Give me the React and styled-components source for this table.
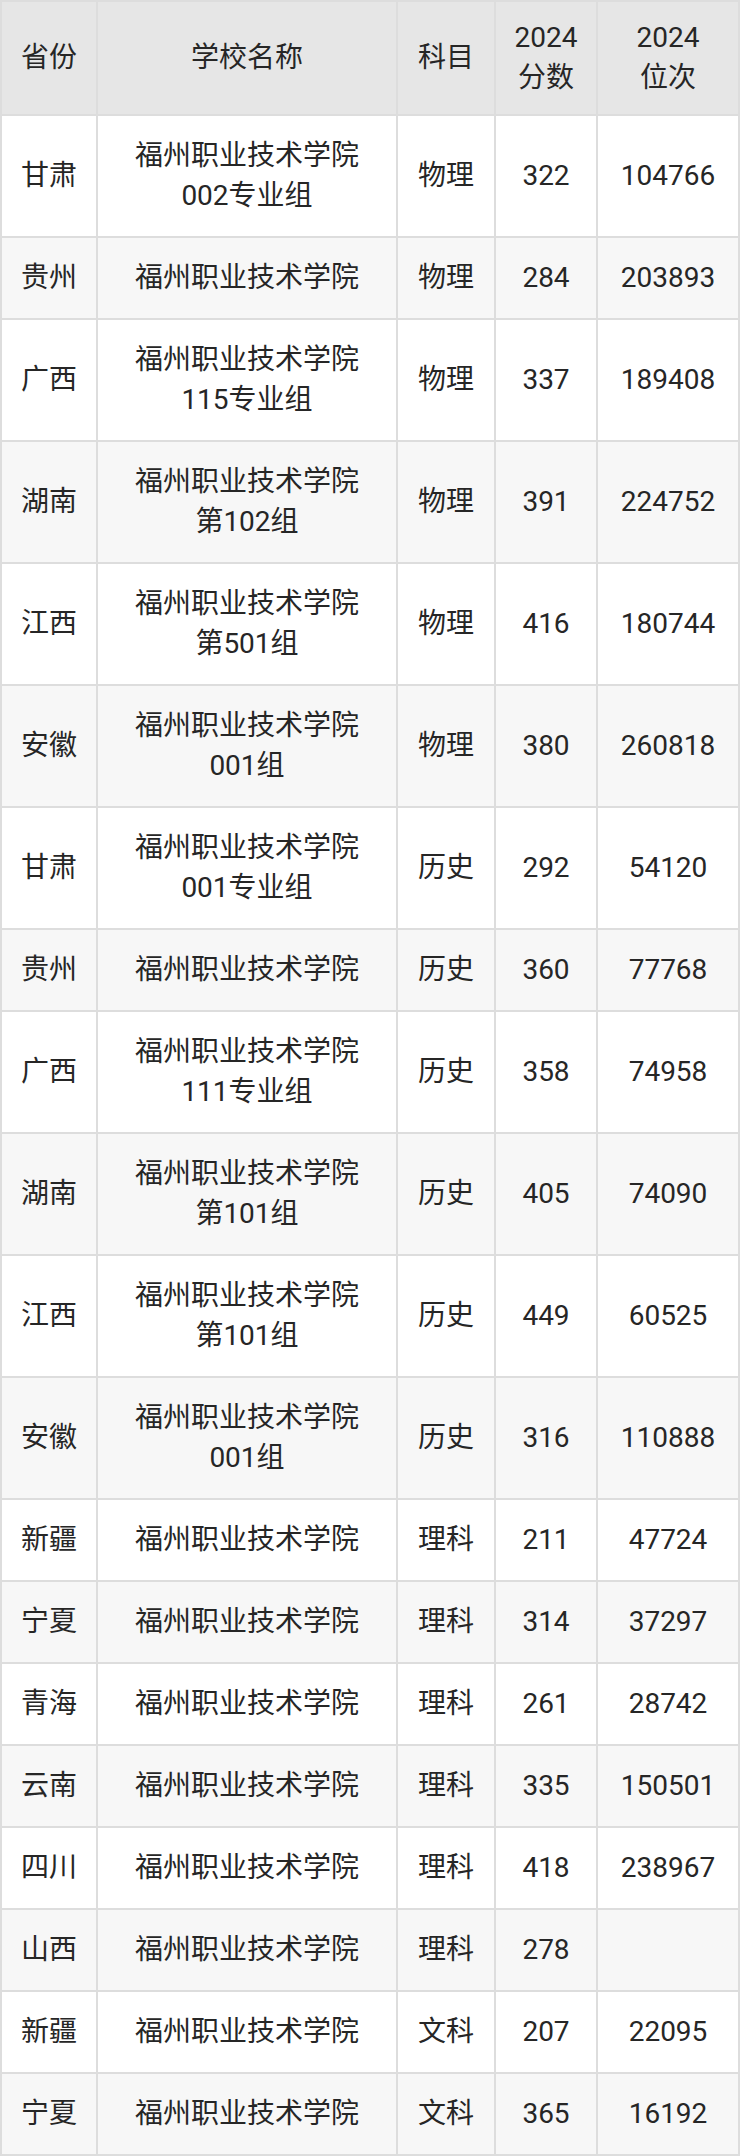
import styled, { createGlobalStyle } from 'styled-components'

const GlobalStyle = createGlobalStyle`
  html, body {
    margin: 0;
    padding: 0;
    background: #fff;
  }
  body {
    font-family: "Roboto", "Noto Sans CJK SC", "Liberation Sans", sans-serif;
  }
`

const Table = styled.div`
  width: 740px;
  box-sizing: border-box;
  display: flex;
  flex-direction: column;
  gap: 2px;
  padding: 2px;
  background: #dddddd;
`

const Row = styled.div`
  display: grid;
  grid-template-columns: 94px 298px 96px 100px 140px;
  gap: 2px;
`

const Cell = styled.div`
  display: flex;
  align-items: center;
  justify-content: center;
  text-align: center;
  box-sizing: border-box;
  min-height: ${p => (p.$head ? '112px' : '80px')};
  padding: ${p => (p.$head ? '16px 4px' : '20px 4px')};
  background: ${p => (p.$head ? '#e6e6e6' : p.$alt ? '#f7f7f7' : '#ffffff')};
  color: #262626;
  font-size: 28px;
  line-height: 40px;
`

const header = ['省份', '学校名称', '科目', '2024\n分数', '2024\n位次']

const rows = [
  ['甘肃', '福州职业技术学院\n002专业组', '物理', '322', '104766'],
  ['贵州', '福州职业技术学院', '物理', '284', '203893'],
  ['广西', '福州职业技术学院\n115专业组', '物理', '337', '189408'],
  ['湖南', '福州职业技术学院\n第102组', '物理', '391', '224752'],
  ['江西', '福州职业技术学院\n第501组', '物理', '416', '180744'],
  ['安徽', '福州职业技术学院\n001组', '物理', '380', '260818'],
  ['甘肃', '福州职业技术学院\n001专业组', '历史', '292', '54120'],
  ['贵州', '福州职业技术学院', '历史', '360', '77768'],
  ['广西', '福州职业技术学院\n111专业组', '历史', '358', '74958'],
  ['湖南', '福州职业技术学院\n第101组', '历史', '405', '74090'],
  ['江西', '福州职业技术学院\n第101组', '历史', '449', '60525'],
  ['安徽', '福州职业技术学院\n001组', '历史', '316', '110888'],
  ['新疆', '福州职业技术学院', '理科', '211', '47724'],
  ['宁夏', '福州职业技术学院', '理科', '314', '37297'],
  ['青海', '福州职业技术学院', '理科', '261', '28742'],
  ['云南', '福州职业技术学院', '理科', '335', '150501'],
  ['四川', '福州职业技术学院', '理科', '418', '238967'],
  ['山西', '福州职业技术学院', '理科', '278', ''],
  ['新疆', '福州职业技术学院', '文科', '207', '22095'],
  ['宁夏', '福州职业技术学院', '文科', '365', '16192'],
]

const Lines = ({ text }) =>
  text.split('\n').map((line, i) => (
    <span key={i}>
      {i > 0 && <br />}
      {line}
    </span>
  ))

export default function App() {
  return (
    <>
      <GlobalStyle />
      <Table>
        <Row>
          {header.map((h, i) => (
            <Cell key={i} $head>
              <div><Lines text={h} /></div>
            </Cell>
          ))}
        </Row>
        {rows.map((r, ri) => (
          <Row key={ri}>
            {r.map((c, ci) => (
              <Cell key={ci} $alt={ri % 2 === 1}>
                <div><Lines text={c} /></div>
              </Cell>
            ))}
          </Row>
        ))}
      </Table>
    </>
  )
}
